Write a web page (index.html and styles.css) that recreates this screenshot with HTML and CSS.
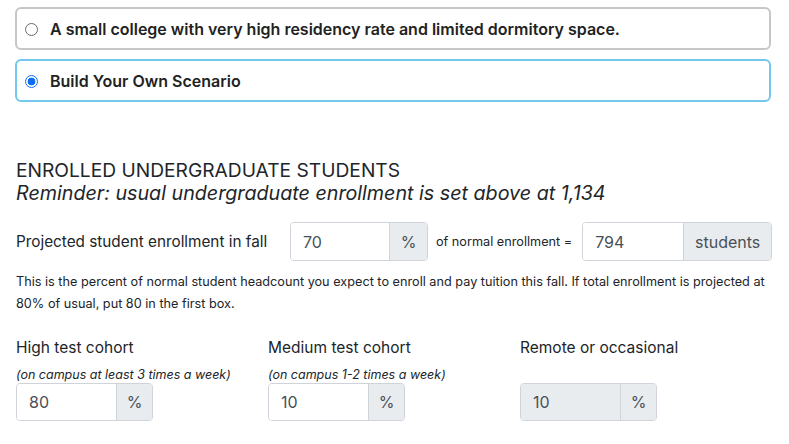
FILE: index.html
```html
<!DOCTYPE html>
<html>
<head>
<meta charset="utf-8">
<link rel="stylesheet" href="styles.css">
</head>
<body>
<div class="page">
  <label class="choice">
    <span class="radio"></span>
    <span class="choice-text">A small college with very high residency rate and limited dormitory space.</span>
  </label>
  <label class="choice selected">
    <span class="radio checked"></span>
    <span class="choice-text">Build Your Own Scenario</span>
  </label>

  <h2 class="section-title">ENROLLED UNDERGRADUATE STUDENTS</h2>
  <p class="reminder">Reminder: usual undergraduate enrollment is set above at 1,134</p>

  <div class="enroll-row">
    <span class="row-label">Projected student enrollment in fall</span>
    <div class="input-group pct-group">
      <span class="field">70</span>
      <span class="addon">%</span>
    </div>
    <span class="mid-text">of normal enrollment =</span>
    <div class="input-group students-group">
      <span class="field">794</span>
      <span class="addon">students</span>
    </div>
  </div>
  <p class="help">This is the percent of normal student headcount you expect to enroll and pay tuition this fall. If total enrollment is projected at 80% of usual, put 80 in the first box.</p>

  <div class="cohorts">
    <div class="cohort">
      <div class="cohort-title">High test cohort</div>
      <div class="cohort-note">(on campus at least 3 times a week)</div>
      <div class="input-group small-group">
        <span class="field">80</span>
        <span class="addon">%</span>
      </div>
    </div>
    <div class="cohort">
      <div class="cohort-title">Medium test cohort</div>
      <div class="cohort-note">(on campus 1-2 times a week)</div>
      <div class="input-group small-group">
        <span class="field">10</span>
        <span class="addon">%</span>
      </div>
    </div>
    <div class="cohort">
      <div class="cohort-title">Remote or occasional</div>
      <div class="cohort-note">&nbsp;</div>
      <div class="input-group small-group disabled">
        <span class="field">10</span>
        <span class="addon">%</span>
      </div>
    </div>
  </div>
</div>
</body>
</html>
```

FILE: styles.css
```css
* { box-sizing: border-box; }
html, body { margin: 0; padding: 0; background: #fff; }
body {
  font-family: Inter, "Noto Sans", "Liberation Sans", sans-serif;
  color: #212529;
}
.page {
  padding: 7px 18px 0 15px;
}
.choice {
  display: flex;
  align-items: center;
  height: 43px;
  border: 2px solid #c6c6c6;
  border-radius: 6px;
  padding: 0 8px;
  margin-bottom: 9px;
}
.choice.selected { border-color: #72c8ec; }
.radio {
  width: 13px;
  height: 13px;
  border: 1px solid #6c6c6c;
  border-radius: 50%;
  flex: none;
  margin-right: 12px;
  margin-top: 1px;
}
.radio.checked {
  border: 1px solid #0d6efd;
  background: radial-gradient(circle, #0d6efd 0 3.6px, #fff 4.2px);
}
.choice-text {
  font-size: 16px;
  font-weight: 600;
  color: #222;
}
.section-title {
  margin: 57px 0 0 1px;
  font-size: 19.2px;
  font-weight: 400;
  line-height: 23px;
}
.reminder {
  margin: 0 0 0 1px;
  font-size: 19.7px;
  font-style: italic;
  font-weight: 400;
  line-height: 23px;
}
.enroll-row {
  display: flex;
  align-items: center;
  margin-top: 17px;
  padding-left: 1px;
}
.row-label {
  flex: none;
  font-size: 15.3px;
  width: 274px;
  color: #212529;
}
.input-group {
  display: flex;
  flex: none;
  height: 39px;
  border: 1px solid #ced4da;
  border-radius: 4px;
  overflow: hidden;
}
.field {
  display: flex;
  align-items: center;
  padding-left: 12px;
  font-size: 16px;
  color: #495057;
  background: #fff;
}
.addon {
  display: flex;
  align-items: center;
  justify-content: center;
  background: #e9ecef;
  border-left: 1px solid #ced4da;
  font-size: 16px;
  color: #495057;
}
.pct-group .field { width: 98px; }
.pct-group .addon { width: 38px; }
.mid-text {
  flex: none;
  white-space: nowrap;
  font-size: 12.7px;
  margin: 0 10px 0 8px;
  color: #212529;
}
.students-group .field { width: 100px; }
.students-group .addon { width: 88px; }
.help {
  margin: 10px 0 0 1px;
  font-size: 12.7px;
  line-height: 22px;
  color: #212529;
}
.cohorts {
  display: grid;
  grid-template-columns: 252px 252px 252px;
  margin-top: 23px;
  padding-left: 1px;
}
.cohort-title {
  font-size: 15.5px;
  line-height: 20px;
}
.cohort-note {
  font-size: 12.5px;
  font-style: italic;
  line-height: 16px;
  margin-top: 9px;
}
.small-group {
  width: 137px;
  height: 38px;
  margin-top: 0;
}
.small-group .field { width: 99px; }
.small-group .addon { flex: 1; }
.small-group.disabled .field { background: #e9ecef; }
```
